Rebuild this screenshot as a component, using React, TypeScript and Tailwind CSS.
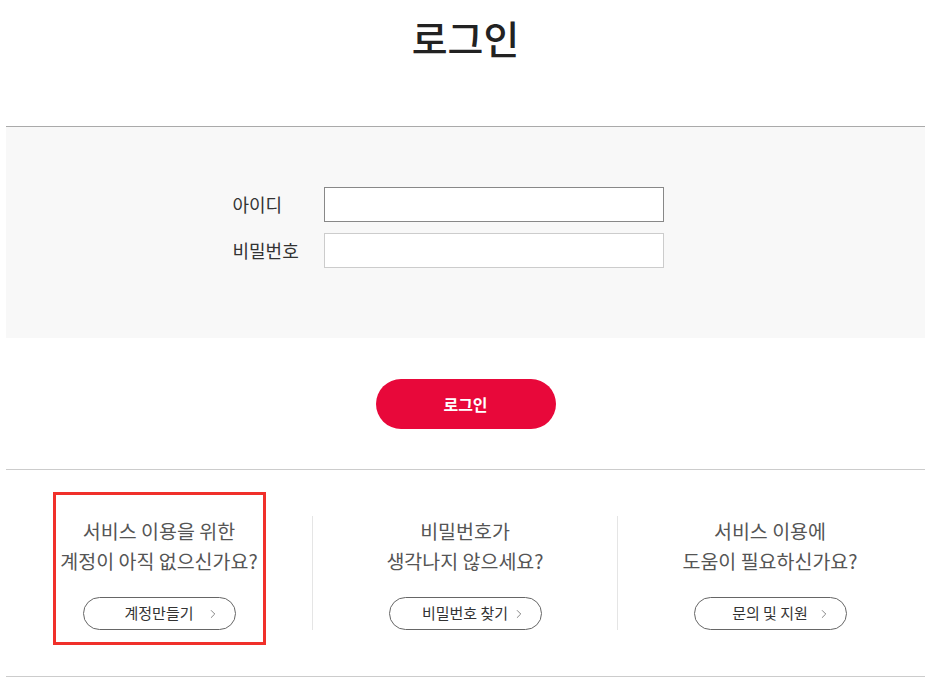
import { ChevronRight } from 'lucide-react'

const helpItems = [
  { lines: ['서비스 이용을 위한', '계정이 아직 없으신가요?'], button: '계정만들기' },
  { lines: ['비밀번호가', '생각나지 않으세요?'], button: '비밀번호 찾기' },
  { lines: ['서비스 이용에', '도움이 필요하신가요?'], button: '문의 및 지원' },
]

export default function App() {
  return (
    <div
      className="min-h-screen bg-white px-[6px] text-[#333]"
      style={{ fontFamily: '"Noto Sans CJK KR", "Noto Sans", sans-serif' }}
    >
      {/* title */}
      <div className="h-[126px] pt-[9px] text-center">
        <h1 className="text-[39px] leading-[57px] font-medium text-[#222]">로그인</h1>
      </div>

      {/* form */}
      <div className="border-t border-[#aaa] bg-[#f8f8f8] pt-[60px] pb-[70px]">
        <div className="mx-auto flex w-[466px] flex-col gap-[11px]">
          <div className="flex items-center">
            <label className="w-[91px] text-[18px] text-[#333]">아이디</label>
            <input className="h-[35px] w-[340px] border border-[#888] bg-white px-2 outline-none" />
          </div>
          <div className="flex items-center">
            <label className="w-[91px] text-[18px] text-[#333]">비밀번호</label>
            <input type="password" className="h-[35px] w-[340px] border border-[#ccc] bg-white px-2 outline-none" />
          </div>
        </div>
      </div>

      <div className="flex justify-center pt-[41px] pb-[40px]">
        <button className="h-[50px] w-[180px] rounded-full bg-[#e8083a] text-[16px] font-bold text-white">
          로그인
        </button>
      </div>

      {/* help */}
      <div className="grid grid-cols-[306px_305px_305px] border-t border-b border-[#ccc] pt-[46px] pb-[46px]">
        {helpItems.map((item, i) => (
          <div
            key={i}
            className={`relative flex flex-col items-center ${i > 0 ? 'border-l border-[#e5e5e5]' : ''}`}
          >
            {i === 0 && (
              <div className="absolute top-[-24px] left-[47px] h-[153px] w-[213px] border-[3px] border-[#f0302a]" />
            )}
            <p className="text-center text-[19.5px] leading-[30px] text-[#555]">
              {item.lines[0]}
              <br />
              {item.lines[1]}
            </p>
            <button className="relative mt-[21px] h-[33px] w-[153px] rounded-full border border-[#666] bg-white text-[15px] text-[#333]">
              {item.button}
              <ChevronRight className="absolute top-1/2 right-[15px] h-[14px] w-[14px] -translate-y-1/2 text-[#555]" strokeWidth={1.2} />
            </button>
          </div>
        ))}
      </div>
    </div>
  )
}
